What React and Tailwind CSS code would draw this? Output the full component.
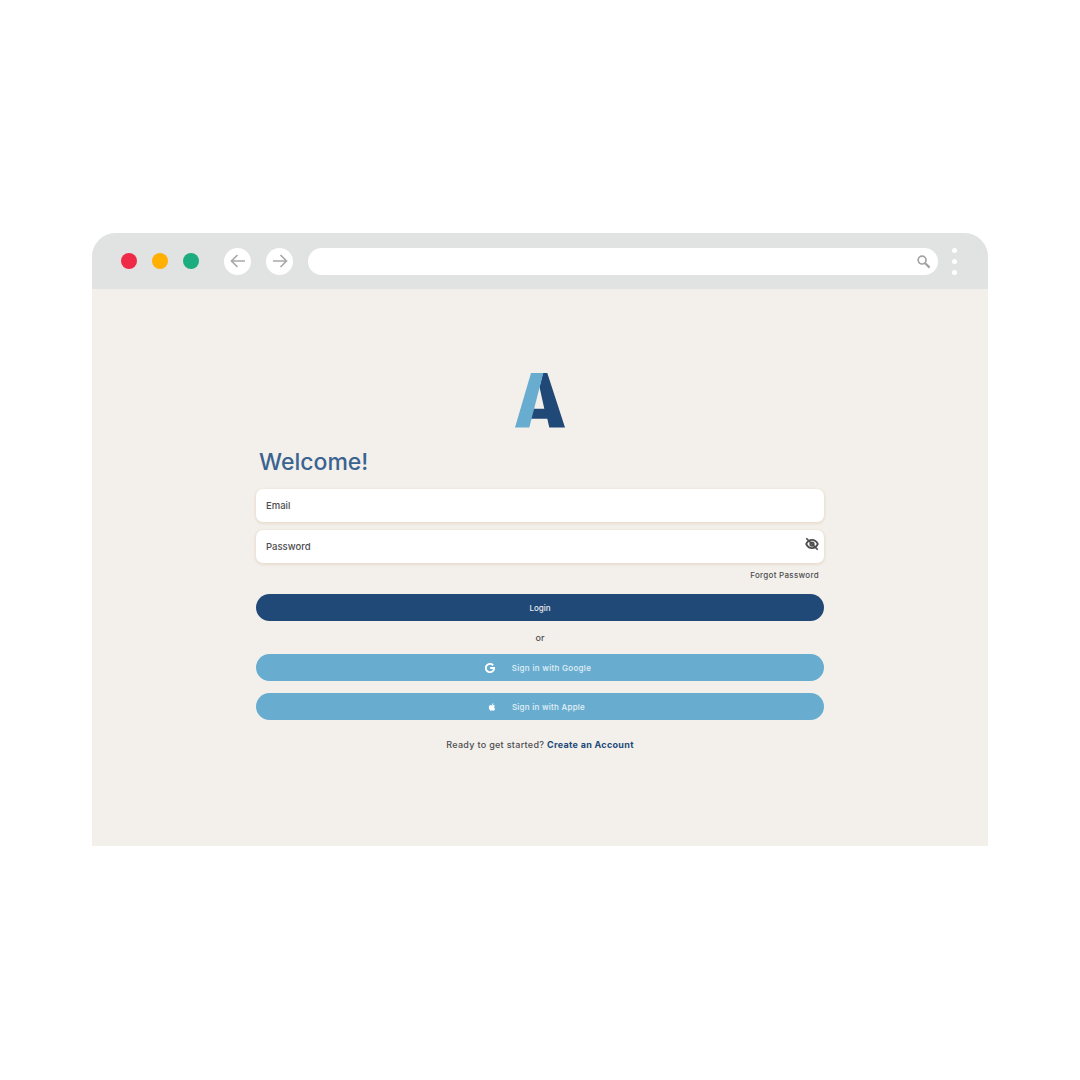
import React from "react";

function Logo() {
  return (
    <svg width="52" height="58" viewBox="514 372 52 58" className="block">
      <path d="M543 373 H547.3 L565 427.6 H549.3 L547.3 418.7 H530 L533 408.7 H544.3 L539.5 387 Z" fill="#214977" />
      <path d="M531 373 H543.3 L529.3 427.6 H515 Z" fill="#68add0" />
    </svg>
  );
}

function Arrow({ flip }) {
  return (
    <svg width="18" height="18" viewBox="0 0 18 18" fill="none" stroke="#a9a9a9" strokeWidth="1.7" className={flip ? "-scale-x-100" : ""}>
      <path d="M16 9 H2.5 M8.5 3 L2.5 9 L8.5 15" />
    </svg>
  );
}

function Field({ label, children }) {
  return (
    <div className="flex h-[33px] w-full items-center justify-between rounded-[7px] bg-white pl-[10px] pr-[5px] text-[9.5px] font-medium text-[#4d4d4f] shadow-[0_1px_3px_1px_#e8dccf]">
      <span className="pt-[1px]">{label}</span>
      {children}
    </div>
  );
}

function PillButton({ bg, children, className = "" }) {
  return (
    <div className={`flex h-[27px] w-full items-center justify-center rounded-full text-[8px] font-medium ${bg} ${className}`}>
      {children}
    </div>
  );
}

export default function App() {
  return (
    <div className="h-[1080px] w-[1080px] bg-white pl-[92px] pt-[233px] font-['Inter',sans-serif]">
      <div className="flex h-[613px] w-[896px] flex-col overflow-hidden rounded-t-[24px] bg-[#f3f0ec]">
        <div className="flex h-[56px] shrink-0 items-center bg-[#e1e2e2] pl-[29px]">
          <div className="h-4 w-4 rounded-full bg-[#ee2a47]" />
          <div className="ml-[15px] h-4 w-4 rounded-full bg-[#ffb000]" />
          <div className="ml-[15px] h-4 w-4 rounded-full bg-[#1cac7e]" />
          <div className="ml-[25px] flex h-[27px] w-[27px] items-center justify-center rounded-full bg-white">
            <Arrow />
          </div>
          <div className="ml-[15px] flex h-[27px] w-[27px] items-center justify-center rounded-full bg-white">
            <Arrow flip />
          </div>
          <div className="ml-[15px] flex h-[27px] w-[630px] items-center justify-end rounded-full bg-white pr-[7px]">
            <svg width="15" height="15" viewBox="0 0 16 16" fill="none" stroke="#a3a3a3" strokeWidth="1.8">
              <circle cx="6.5" cy="6.5" r="4.2" />
              <path d="M9.8 9.8 L14.5 14.5" strokeWidth="2.4" />
            </svg>
          </div>
          <div className="ml-[14px] flex flex-col gap-[6px]">
            <div className="h-[5px] w-[5px] rounded-full bg-white" />
            <div className="h-[5px] w-[5px] rounded-full bg-white" />
            <div className="h-[5px] w-[5px] rounded-full bg-white" />
          </div>
        </div>

        <div className="mx-auto flex w-[568px] flex-col items-center pt-[83px]">
          <Logo />
          <div className="mt-[16px] w-full pl-[3px] text-[23px] font-medium leading-[32px] text-[#3a6390]">Welcome!</div>
          <div className="mt-[11px] flex w-full flex-col gap-2">
            <Field label="Email" />
            <Field label="Password">
              <svg width="14" height="14" viewBox="0 0 24 24" fill="none" stroke="#4d4d4f" strokeWidth="3" strokeLinecap="round" strokeLinejoin="round" className="mb-[5px]">
                <path d="M2 12s3.5-7 10-7 10 7 10 7-3.5 7-10 7-10-7-10-7Z" />
                <circle cx="12" cy="12" r="3" />
                <path d="M3 3 L21 21" />
              </svg>
            </Field>
          </div>
          <div className="mt-[6px] w-full pr-[5px] text-right text-[8px] font-medium leading-[12px] tracking-[0.3px] text-[#4d4d4f]">Forgot Password</div>
          <PillButton bg="bg-[#214977] text-[#e6ebf0]" className="mt-[13px]">Login</PillButton>
          <div className="mt-[11px] text-[9px] font-medium leading-[12px] text-[#4d4d4f]">or</div>
          <PillButton bg="bg-[#68add0] text-[#e3f0f6]" className="mt-[10px]">
            <svg width="10" height="10" viewBox="0 0 24 24" fill="none" stroke="#ffffff" strokeWidth="4.5" className="ml-[-4px] mr-[17px]">
              <path d="M19.5 5.5 A10 10 0 1 0 22 12 H12.5" />
            </svg>
            <span className="tracking-[0.3px]">Sign in with Google</span>
          </PillButton>
          <PillButton bg="bg-[#68add0] text-[#e3f0f6]" className="mt-[12px]">
            <svg width="10" height="10" viewBox="0 0 24 24" fill="#ffffff" className="ml-[-8px] mr-[15px]">
              <path d="M17.05 20.28c-.98.95-2.05.8-3.08.35-1.09-.46-2.09-.48-3.24 0-1.44.62-2.2.44-3.06-.35C2.79 15.25 3.51 7.59 9.05 7.31c1.35.07 2.29.74 3.08.8 1.18-.24 2.31-.93 3.57-.84 1.51.12 2.65.72 3.4 1.8-3.12 1.87-2.38 5.98.48 7.13-.57 1.5-1.31 2.99-2.54 4.09zM12.03 7.25c-.15-2.23 1.66-4.07 3.74-4.25.29 2.58-2.34 4.5-3.74 4.25z" />
            </svg>
            <span className="tracking-[0.25px]">Sign in with Apple</span>
          </PillButton>
          <div className="mt-[19px] text-[9px] font-medium leading-[12px] tracking-[0.3px] text-[#4d4d4f]">
            Ready to get started? <span className="font-bold text-[#214977]">Create an Account</span>
          </div>
        </div>
      </div>
    </div>
  );
}
